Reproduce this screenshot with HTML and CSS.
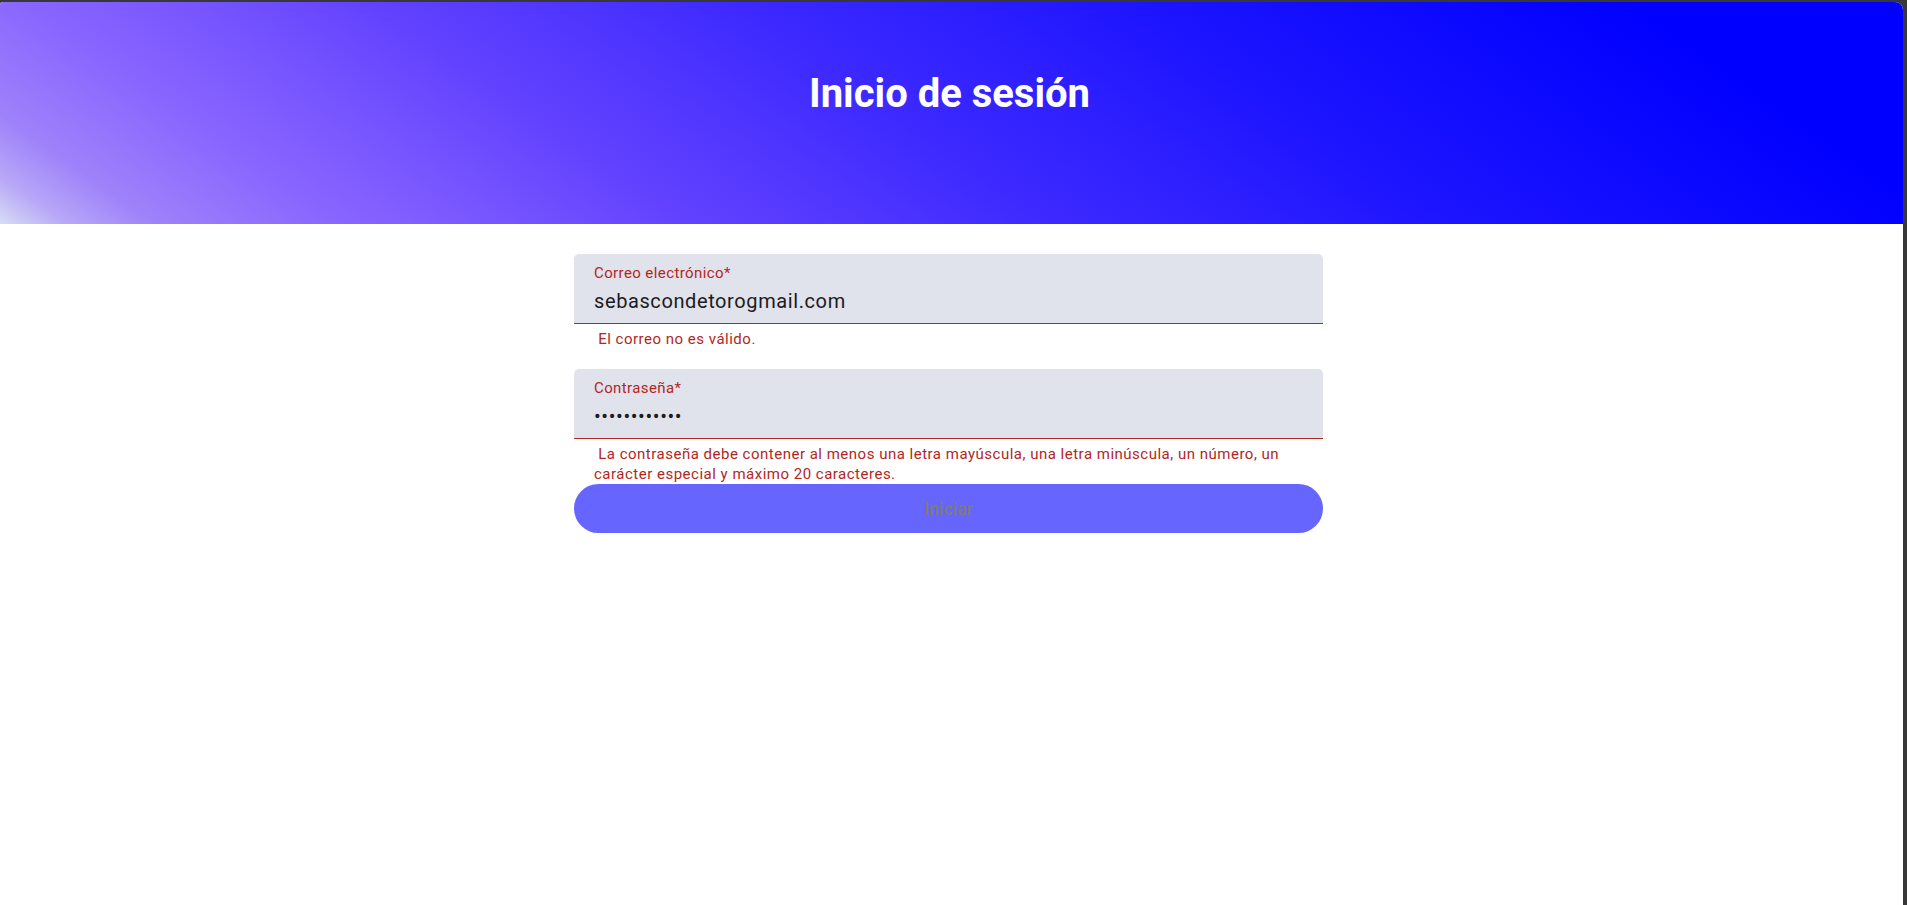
FILE: index.html
```html
<!DOCTYPE html>
<html lang="es">
<head>
<meta charset="utf-8">
<title>Inicio de sesión</title>
<link rel="stylesheet" href="styles.css">
</head>
<body>
<div class="window">
  <header class="hero">
    <h1 class="hero-title">Inicio de sesión</h1>
  </header>
  <main class="main">
    <form class="login-form">
      <div class="form-field form-field--email">
        <label class="field-box">
          <span class="field-label">Correo electrónico*</span>
          <input class="field-input" type="text" value="sebascondetorogmail.com">
        </label>
        <div class="field-error">&nbsp;El correo no es válido.</div>
      </div>
      <div class="form-field">
        <label class="field-box">
          <span class="field-label">Contraseña*</span>
          <input class="field-input" type="password" value="abcdefghijkl">
        </label>
        <div class="field-error">&nbsp;La contraseña debe contener al menos una letra mayúscula, una letra minúscula, un número, un carácter especial y máximo 20 caracteres.</div>
      </div>
      <button class="submit-btn" type="button">Iniciar</button>
    </form>
  </main>
</div>
</body>
</html>
```

FILE: styles.css
```css
html, body {
  margin: 0;
  padding: 0;
}

body {
  background: #383838;
  font-family: Roboto, "Liberation Sans", sans-serif;
  height: 905px;
  overflow: hidden;
}

.window {
  margin: 2px 4px 0 0;
  height: 903px;
  background: #ffffff;
  border-radius: 3px 8px 0 0;
  overflow: hidden;
}

.hero {
  height: 222px;
  box-sizing: border-box;
  padding: 68px 4px 0 0;
  text-align: center;
  background: linear-gradient(35deg,
    #d8ddf3 0%,
    #b8a8f8 3%,
    #9e82fa 7%,
    #8a66ff 15%,
    #7654ff 23%,
    #6242ff 31%,
    #3e2aff 47%,
    #1c14ff 66%,
    #0000ff 88%,
    #0000ff 100%);
}

.hero-title {
  margin: 0;
  font-family: Roboto, "Liberation Sans", sans-serif;
  font-size: 40px;
  line-height: 48px;
  font-weight: 700;
  color: #ffffff;
}

.main {
  display: flex;
  justify-content: center;
  padding: 30px 6px 0 0;
}

.login-form {
  width: 749px;
  display: flex;
  flex-direction: column;
}

.form-field {
  display: flex;
  flex-direction: column;
}

.form-field--email {
  min-height: 115px;
}

.field-box {
  display: flex;
  flex-direction: column;
  box-sizing: border-box;
  height: 70px;
  padding: 9px 20px 0 20px;
  background: #e0e2ec;
  border-radius: 5px 5px 0 0;
  border-bottom: 1px solid #b3261e;
}

.field-label {
  font-size: 15px;
  line-height: 20px;
  letter-spacing: 0.4px;
  color: #b3261e;
}

.field-input {
  margin: 4px 0 0 0;
  padding: 0;
  border: 0;
  outline: none;
  background: transparent;
  height: 28px;
  width: 100%;
  font-family: Roboto, "Liberation Sans", sans-serif;
  font-size: 20px;
  line-height: 28px;
  letter-spacing: 0.6px;
  color: #1d1b20;
}

.field-error {
  padding: 5px 20px 0 20px;
  font-size: 15px;
  line-height: 20px;
  letter-spacing: 0.5px;
  color: #b3261e;
}

.submit-btn {
  margin-top: 0;
  height: 49px;
  border: 0;
  border-radius: 25px;
  background: #6666ff;
  color: #7d7b74;
  font-family: Roboto, "Liberation Sans", sans-serif;
  font-size: 17.5px;
  font-weight: 500;
  letter-spacing: 0.1px;
  cursor: default;
}
```
